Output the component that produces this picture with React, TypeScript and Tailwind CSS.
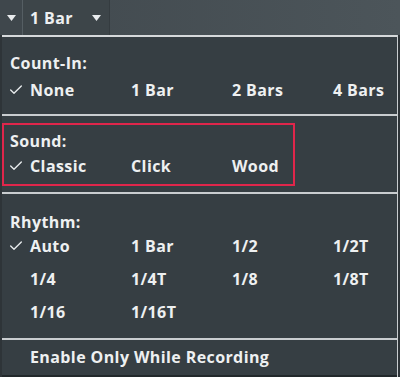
import { Check } from 'lucide-react';

const font = { fontFamily: '"Open Sans", "Liberation Sans", sans-serif' };

function Caret() {
  return (
    <svg width="9" height="6" viewBox="0 0 9 6" className="shrink-0">
      <path d="M0 0 L9 0 L4.5 6 Z" fill="#e9ecee" />
    </svg>
  );
}

function Item({ label, checked }: { label: string; checked?: boolean }) {
  return (
    <div className="relative flex h-[22px] items-center">
      {checked && (
        <Check className="absolute left-[-22px] top-[3px] h-[16px] w-[16px] text-[#e9ecee]" strokeWidth={2} />
      )}
      <span>{label}</span>
    </div>
  );
}

function Separator() {
  return <div className="h-[2px] w-full bg-[#c9cdd0]" />;
}

export default function App() {
  return (
    <div
      className="flex h-[377px] w-[400px] flex-col overflow-hidden bg-[#2e3438] text-[16px] font-bold tracking-[0.4px] text-[#eef0f1]"
      style={font}
    >
      {/* Top bar */}
      <div className="flex h-[35px] shrink-0 bg-gradient-to-r from-[#41494e] to-[#4c555a]">
        <div className="flex w-[22px] items-center justify-center bg-[#3f474c]">
          <Caret />
        </div>
        <div className="w-[1px] bg-[#555e63]" />
        <div className="flex w-[86px] items-center gap-[19px] bg-[#3d4549] pl-[7px]">
          <span>1 Bar</span>
          <Caret />
        </div>
        <div className="w-[1px] bg-[#353c40]" />
      </div>

      {/* Menu */}
      <div className="ml-[2px] mr-[2px] flex flex-1 flex-col border-r border-r-[#c9cdd0] bg-[#363e43]">
        <div className="h-[2px] w-full bg-[#d6d9db]" />

        {/* Count-In */}
        <div className="flex h-[77px] flex-col pl-[8px] pt-[15px]">
          <div className="flex h-[22px] items-center">Count-In:</div>
          <div className="mt-[5px] grid grid-cols-[101px_101px_101px_80px] pl-[20px]">
            <Item label="None" checked />
            <Item label="1 Bar" />
            <Item label="2 Bars" />
            <Item label="4 Bars" />
          </div>
        </div>
        <Separator />

        {/* Sound */}
        <div className="flex h-[76px] flex-col pt-[7px]">
          <div className="flex h-[63px] w-[293px] flex-col border-2 border-[#e0264b] pl-[6px] pt-[5px]">
            <div className="flex h-[22px] items-center">Sound:</div>
            <div className="mt-[3px] grid grid-cols-[101px_101px_80px] pl-[20px]">
              <Item label="Classic" checked />
              <Item label="Click" />
              <Item label="Wood" />
            </div>
          </div>
        </div>
        <Separator />

        {/* Rhythm */}
        <div className="flex h-[144px] flex-col pl-[8px] pt-[17px]">
          <div className="flex h-[22px] items-center">Rhythm:</div>
          <div className="mt-[2px] grid grid-cols-[101px_101px_101px_80px] gap-y-[11px] pl-[20px]">
            <Item label="Auto" checked />
            <Item label="1 Bar" />
            <Item label="1/2" />
            <Item label="1/2T" />
            <Item label="1/4" />
            <Item label="1/4T" />
            <Item label="1/8" />
            <Item label="1/8T" />
            <Item label="1/16" />
            <Item label="1/16T" />
          </div>
        </div>
        <Separator />

        {/* Enable */}
        <div className="flex flex-1 flex-col pl-[28px] pt-[6px]">
          <div className="flex h-[22px] items-center">Enable Only While Recording</div>
        </div>
        <div className="h-[2px] w-full bg-[#22282b]" />
      </div>
    </div>
  );
}
